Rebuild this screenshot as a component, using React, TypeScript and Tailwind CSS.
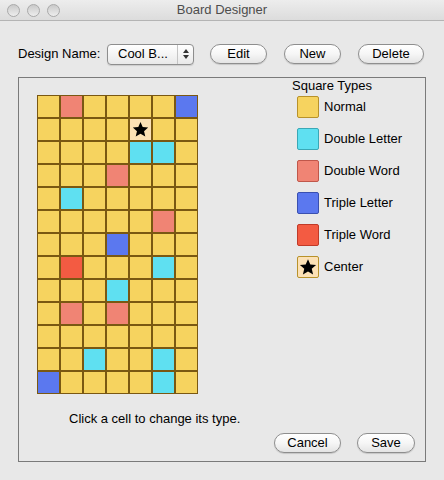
import React from "react";

type Kind = "N" | "DL" | "DW" | "TL" | "TW" | "C";

const fill: Record<Kind, string> = {
  N: "bg-[#f6d35f]",
  DL: "bg-[#5fe0f1]",
  DW: "bg-[#f08474]",
  TL: "bg-[#5b78ef]",
  TW: "bg-[#f35b42]",
  C: "bg-[#fce1b5]",
};

const swatchBorder: Record<Kind, string> = {
  N: "border-[#b8922a]",
  DL: "border-[#3aa8b6]",
  DW: "border-[#c0574a]",
  TL: "border-[#3a50b0]",
  TW: "border-[#c03a28]",
  C: "border-[#b8922a]",
};

const board: Kind[][] = [
  ["N", "DW", "N", "N", "N", "N", "TL"],
  ["N", "N", "N", "N", "C", "N", "N"],
  ["N", "N", "N", "N", "DL", "DL", "N"],
  ["N", "N", "N", "DW", "N", "N", "N"],
  ["N", "DL", "N", "N", "N", "N", "N"],
  ["N", "N", "N", "N", "N", "DW", "N"],
  ["N", "N", "N", "TL", "N", "N", "N"],
  ["N", "TW", "N", "N", "N", "DL", "N"],
  ["N", "N", "N", "DL", "N", "N", "N"],
  ["N", "DW", "N", "DW", "N", "N", "N"],
  ["N", "N", "N", "N", "N", "N", "N"],
  ["N", "N", "DL", "N", "N", "DL", "N"],
  ["TL", "N", "N", "N", "N", "DL", "N"],
];

const legend: { kind: Kind; label: string }[] = [
  { kind: "N", label: "Normal" },
  { kind: "DL", label: "Double Letter" },
  { kind: "DW", label: "Double Word" },
  { kind: "TL", label: "Triple Letter" },
  { kind: "TW", label: "Triple Word" },
  { kind: "C", label: "Center" },
];

function Star({ size }: { size: number }) {
  return (
    <svg width={size} height={size} viewBox="0 0 24 24">
      <path
        d="M12 1.5l3.1 7.1 7.7.7-5.8 5.1 1.8 7.6L12 18l-6.8 4 1.8-7.6-5.8-5.1 7.7-.7z"
        fill="#000"
      />
    </svg>
  );
}

function AquaButton({ label, width }: { label: string; width: string }) {
  return (
    <button
      className={`${width} h-[20px] rounded-full border border-[#8e8e8e] bg-gradient-to-b from-white via-[#f6f6f6] to-[#e4e4e4] text-[13px] leading-[18px] text-black shadow-[0_1px_1px_rgba(0,0,0,0.15)]`}
    >
      {label}
    </button>
  );
}

function TrafficLight() {
  return (
    <div className="w-[13px] h-[13px] rounded-full border border-[#a9a9a9] bg-gradient-to-b from-[#c9c9c9] to-[#eeeeee]" />
  );
}

export default function App() {
  return (
    <div
      className="w-[444px] h-[480px] bg-[#e8e8e8] flex flex-col text-black overflow-hidden"
      style={{ fontFamily: '"Liberation Sans", Arial, sans-serif' }}
    >
      {/* Title bar */}
      <div className="h-[21px] relative flex items-center bg-gradient-to-b from-[#ededed] to-[#dcdcdc] border-b border-[#b4b4b4]">
        <div className="flex gap-[7px] pl-[7px]">
          <TrafficLight />
          <TrafficLight />
          <TrafficLight />
        </div>
        <div className="absolute inset-0 flex items-center justify-center text-[13px] text-[#4d4d4d]">
          Board Designer
        </div>
      </div>

      {/* Toolbar */}
      <div className="mt-[22px] h-[22px] flex items-center pl-[18px]">
        <span className="text-[13px] w-[89px]">Design Name:</span>
        <div className="w-[87px] h-[21px] rounded-[4px] border border-[#8e8e8e] bg-gradient-to-b from-white to-[#e9e9e9] flex items-center text-[13px] shadow-[0_1px_1px_rgba(0,0,0,0.12)]">
          <span className="pl-[10px] flex-1">Cool B...</span>
          <div className="w-[16px] h-full border-l border-[#c4c4c4] flex flex-col items-center justify-center gap-[2px]">
            <div className="w-0 h-0 border-l-[3px] border-r-[3px] border-b-[4px] border-l-transparent border-r-transparent border-b-[#333]" />
            <div className="w-0 h-0 border-l-[3px] border-r-[3px] border-t-[4px] border-l-transparent border-r-transparent border-t-[#333]" />
          </div>
        </div>
        <div className="ml-[16px] flex gap-[17px]">
          <AquaButton label="Edit" width="w-[57px]" />
          <AquaButton label="New" width="w-[57px]" />
          <AquaButton label="Delete" width="w-[66px]" />
        </div>
      </div>

      {/* Panel */}
      <div className="mt-[12px] ml-[18px] w-[408px] h-[385px] border border-[#7a7a7a] flex flex-col">
        <div className="flex">
          <div className="ml-[18px] mt-[17px] grid grid-cols-[repeat(7,23px)]">
            {board.flat().map((k, i) => (
              <div
                key={i}
                className={`w-[23px] h-[23px] border border-[#7a5812] ${fill[k]} flex items-center justify-center`}
              >
                {k === "C" && <Star size={17} />}
              </div>
            ))}
          </div>

          <div className="ml-[94px] flex flex-col">
            <div className="h-[16px] leading-[16px] text-[13px]">Square Types</div>
            <div className="mt-[2px] ml-[5px] flex flex-col gap-[10px]">
              {legend.map((l) => (
                <div key={l.label} className="flex items-center gap-[5px] h-[22px]">
                  <div
                    className={`w-[22px] h-[22px] rounded-[2px] border ${swatchBorder[l.kind]} ${fill[l.kind]} flex items-center justify-center`}
                  >
                    {l.kind === "C" && <Star size={18} />}
                  </div>
                  <span className="text-[13px]">{l.label}</span>
                </div>
              ))}
            </div>
          </div>
        </div>

        <div className="mt-[17px] ml-[50px] h-[16px] leading-[16px] text-[13px]">
          Click a cell to change its type.
        </div>

        <div className="mt-[6px] flex justify-end gap-[16px] pr-[10px]">
          <AquaButton label="Cancel" width="w-[67px]" />
          <AquaButton label="Save" width="w-[58px]" />
        </div>
      </div>
    </div>
  );
}
